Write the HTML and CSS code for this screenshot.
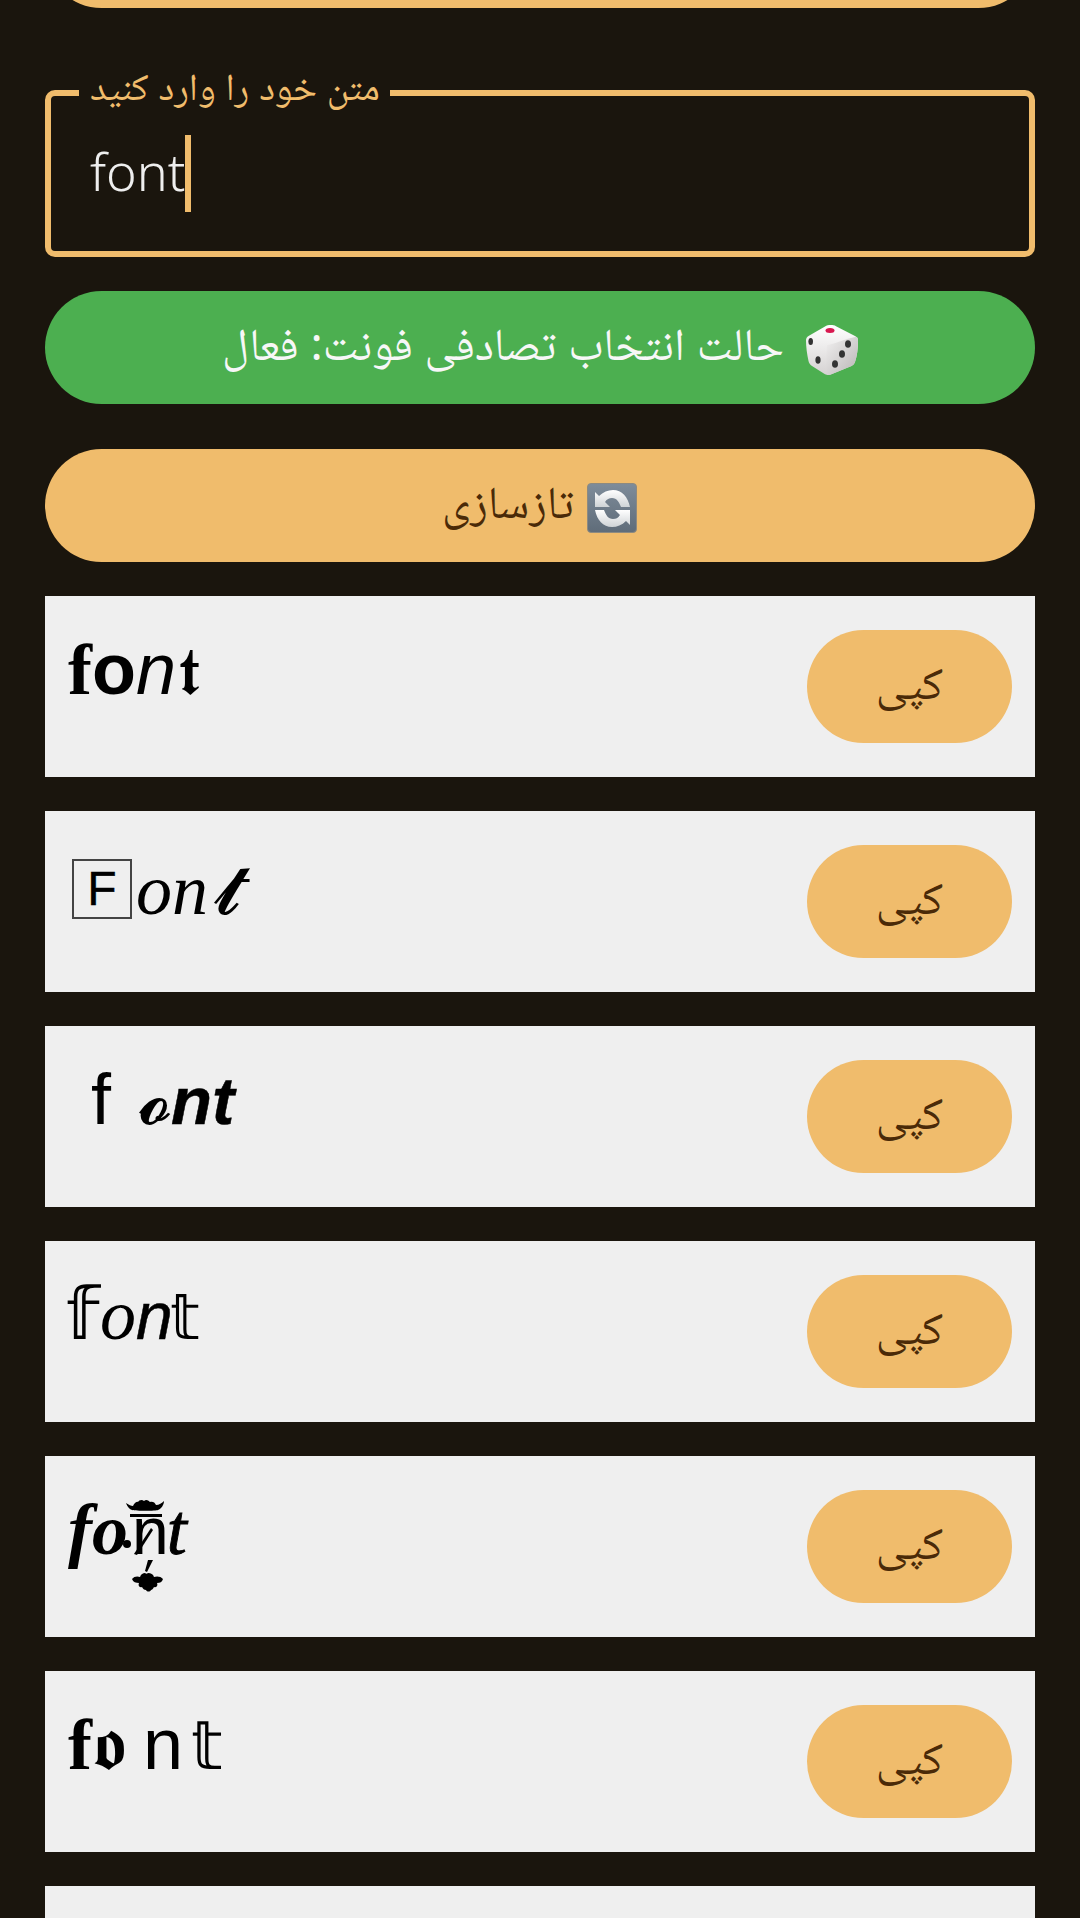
FILE: index.html
```html
<!DOCTYPE html>
<html lang="fa">
<head>
<meta charset="utf-8">
<title>فونت</title>
<link rel="stylesheet" href="styles.css">
</head>
<body>
<main class="page">
  <button class="pill pill-orange pill-top" type="button"></button>
  <fieldset class="field">
    <legend class="field-label" dir="rtl">متن خود را وارد کنید</legend>
    <div class="field-value"><span class="field-text">font</span><span class="caret"></span></div>
  </fieldset>
  <button class="pill pill-green" type="button" dir="rtl">
    <svg class="emoji" viewBox="0 0 52 50"><defs><linearGradient id="dr" x1="0" y1="0" x2="1" y2="1"><stop offset="0" stop-color="#f1f0f0"/><stop offset="1" stop-color="#b9b5b5"/></linearGradient><linearGradient id="dl" x1="0" y1="0" x2="0" y2="1"><stop offset="0" stop-color="#fff"/><stop offset="1" stop-color="#d5d2d2"/></linearGradient></defs><path d="M19 1.5C22 -.3 27 -.3 30 1.2L49 11c2.500 1.200 3 3 3 5 0 8-1 15-3 21-.6 2-2 3-3.500 4L26 49c-2.500 1.200-5 1.200-7 .2L6 41c-2-1.300-3-3-3.500-5C1 29 0 22 0 15c0-1.500 1-3 2.500-4z" fill="url(#dl)"/><path d="M21 20C26 20 44 12 51 12c1 1.200 1 2.500 1 4 0 8-1 15-3 21-.6 2-2 3-3.500 4L26 49c-2 1-3.500 1-5 .8-1-9-1-20 0-30z" fill="url(#dr)"/><ellipse cx="24" cy="5.500" rx="4.500" ry="2.500" fill="#d8174f"/><ellipse cx="4.700" cy="16.500" rx="2.300" ry="3.600" fill="#333"/><ellipse cx="12" cy="35" rx="2.600" ry="3.800" fill="#333"/><ellipse cx="42" cy="19" rx="3" ry="3.800" fill="#333"/><ellipse cx="36" cy="29" rx="3" ry="3.800" fill="#333"/><ellipse cx="29" cy="39" rx="3" ry="3.800" fill="#333"/></svg>
    <span>حالت انتخاب تصادفی فونت: فعال</span>
  </button>
  <button class="pill pill-orange pill-refresh" type="button" dir="rtl">
    <svg class="emoji" viewBox="0 0 50 50"><defs><linearGradient id="rb" x1="0" y1="0" x2="0" y2="1"><stop offset="0" stop-color="#7e8c9a"/><stop offset="1" stop-color="#5f6c79"/></linearGradient><linearGradient id="ra" x1="0" y1="0" x2="0" y2="1"><stop offset="0" stop-color="#fff"/><stop offset="1" stop-color="#cfd3d6"/></linearGradient></defs><rect x="0.500" y="0.500" width="49" height="49" rx="3.500" fill="url(#rb)" stroke="#8d8a80"/><path d="M8 9l4 4c4-4 9-6 14-6 9 0 15 7 17 17h-9c-2-5-4-9-9-9-3 0-5 1-7 4l5 5H8z" fill="url(#ra)"/><path d="M43 42l-4-4c-4 4-9 6-14 6-9 0-15-7-17-17h9c2 5 4 9 9 9 3 0 5-1 7-4l-5-5h15z" fill="url(#ra)"/></svg>
    <span>تازسازی</span>
  </button>
  <section class="card-list">
    <article class="card">
      <p class="fancy"><span class="serif-b">f</span><span class="sans-b">o</span><span class="sans-i">n</span><span class="frak-t">𝖙</span></p>
      <button class="pill pill-orange copy" type="button">کپی</button>
    </article>
    <article class="card">
      <p class="fancy fancy-tall"><span class="boxed">F</span><span class="serif-i">on</span><span class="script-t">𝓽</span></p>
      <button class="pill pill-orange copy" type="button">کپی</button>
    </article>
    <article class="card">
      <p class="fancy"><span class="sans spaced-f">f</span><span class="script">𝓸</span><span class="sans-bi narrow-nt">nt</span></p>
      <button class="pill pill-orange copy" type="button">کپی</button>
    </article>
    <article class="card">
      <p class="fancy"><span class="struck-f">𝕗</span><span class="serif-i">o</span><span class="sans-i heavy-n">n</span><span class="struck-t">𝕥</span></p>
      <button class="pill pill-orange copy" type="button">کپی</button>
    </article>
    <article class="card">
      <p class="fancy"><span class="serif-bi">fo</span><span class="sans ornate-n">n</span><span class="serif-i heavy-t">t</span></p>
      <svg class="ornament" viewBox="0 0 50 100"><path d="M4 8c3 2 5 3 7 3 1-2 3-5 5-4 1-2 4-3 6-1 2-2 4-1 6 1 2-1 5 0 6 3 3 0 6-2 8-4 0 4-3 8-6 9-2 1-22 1-26 0-3-1-5-4-6-7z" fill="#000"/><rect x="8" y="19" width="32" height="3" fill="#000"/><path d="M12 59l17-26 2 2-16 25z" fill="#000"/><circle cx="5" cy="49" r="4" fill="#000"/><path d="M26 65l-3 11 2 1 6-12z" fill="#000"/><path d="M10 84c2-3 6-3 8-2 1-3 3-4 5-4 1 1 2 1 3 0 3 0 5 1 6 4 2-1 7-1 9 2-1 3-3 4-6 4 1 2 0 5-3 4-1 2-2 3-3 3-1 2-4 2-5 0-2 0-3-1-4-3-3 1-4-2-3-4-3 0-6-1-7-4z" fill="#000"/></svg>
      <button class="pill pill-orange copy" type="button">کپی</button>
    </article>
    <article class="card">
      <p class="fancy"><span class="serif-b">f</span><span class="frak-o">𝖔</span><span class="sans spaced-n">n</span><span class="struck">𝕥</span></p>
      <button class="pill pill-orange copy" type="button">کپی</button>
    </article>
    <article class="card"></article>
  </section>
</main>
</body>
</html>
```
FILE: styles.css
```css
* { box-sizing: border-box; }
html, body { margin: 0; height: 1918px; overflow: hidden; background: #1a150d; }
body { font-family: "Noto Sans", "Noto Naskh Arabic", serif; }
.page { display: flex; flex-direction: column; padding: 0 45px; margin-top: -105px; }
.pill { display: flex; align-items: center; justify-content: center; gap: 22px; height: 113px; border: 0; border-radius: 57px; font: inherit; font-size: 45.5px; padding: 5px 0 0; }
.pill-orange { background: #f0bc6c; color: #4a2a08; }
.pill-green { background: #4caf50; color: #f7f7f7; margin-bottom: 45px; }
.pill-top { margin-bottom: 65px; flex: none; }
.pill-refresh { gap: 12px; }
.emoji { width: 52px; height: 50px; flex: none; }
.field { margin: 0 0 34px; padding: 0 39px; height: 184px; border: 6px solid #f0bc6c; border-radius: 10px; min-width: 0; }
.field-label { color: #f0bc6c; font-size: 38px; line-height: 25px; padding: 0 10px 15px 11px; margin-left: -11px; }
.field-value { display: flex; align-items: center; color: #eee; font-size: 52px; font-weight: 300; height: 77px; margin-top: 22px; }
.field-text { padding-bottom: 6px; }
.caret { width: 6px; height: 77px; background: #f0bc6c; }
.card-list { display: flex; flex-direction: column; gap: 34px; margin-top: 34px; }
.card { position: relative; display: flex; justify-content: space-between; align-items: flex-start; height: 181px; flex: none; background: #efefef; padding: 34px 23px; }
.fancy { margin: -34px 0 0; padding-top: 37px; font-family: "Liberation Sans", sans-serif; font-size: 72px; line-height: 72px; color: #000; white-space: nowrap; }
.fancy-tall { padding-top: 42px; }
.copy { width: 205px; flex: none; font-size: 46px; }
.serif-b { font-family: "Liberation Serif", serif; font-weight: 700; }
.serif-i { font-family: "Liberation Serif", serif; font-style: italic; }
.serif-bi { font-family: "Liberation Serif", serif; font-weight: 700; font-style: italic; }
.sans { font-family: "Liberation Sans", sans-serif; }
.sans-b { font-family: "Liberation Sans", sans-serif; font-weight: 700; }
.sans-i { font-family: "Liberation Sans", sans-serif; font-style: italic; }
.sans-bi { font-family: "Liberation Sans", sans-serif; font-weight: 700; font-style: italic; }
.heavy-n { font-size: 66px; -webkit-text-stroke: 0.5px #000; }
.heavy-t { margin-left: -2px; -webkit-text-stroke: 0.9px #000; }
.narrow-nt { font-size: 67px; margin-left: -2px; -webkit-text-stroke: 0.5px #000; }
.frak-t { font-size: 66px; margin-left: 3px; }
.frak-o { font-size: 74px; }
.script { font-size: 72px; }
.script-t { font-size: 72px; margin-left: 6px; }
.struck { font-size: 68px; }
.struck-f { font-size: 72px; margin-left: -2px; }
.struck-t { font-size: 64px; margin-left: -3px; }
.boxed { display: inline-flex; align-items: center; justify-content: center; overflow: hidden; width: 60px; height: 60px; margin: 0 4px; border: 2px solid #444; font-size: 48px; line-height: 48px; vertical-align: 9px; -webkit-text-stroke: 0.4px #000; }
.spaced-f { margin: 0 28px 0 23px; }
.spaced-n { margin: 0 8px 0 17px; }
.ornate-n { font-size: 66px; margin-left: 4px; }
.ornament { position: absolute; left: 77px; top: 39px; width: 50px; height: 100px; }
```
